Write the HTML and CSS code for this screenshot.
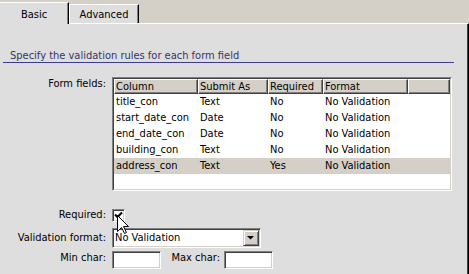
FILE: index.html
```html
<!DOCTYPE html>
<html>
<head>
<meta charset="utf-8">
<link rel="stylesheet" href="styles.css">
</head>
<body>
<div class="window">
  <div class="tabs">
    <div class="tab tab-active">Basic</div>
    <div class="tab tab-normal">Advanced</div>
  </div>
  <div class="panel">
    <div class="title">Specify the validation rules for each form field</div>

    <div class="field-row row-fields">
      <div class="lbl">Form fields:</div>
      <div class="list">
        <div class="list-inner">
          <div class="list-head">
            <div class="hc c1">Column</div>
            <div class="hc c2">Submit As</div>
            <div class="hc c3">Required</div>
            <div class="hc c4">Format</div>
            <div class="hc c5"></div>
          </div>
          <div class="list-row"><div class="dc c1">title_con</div><div class="dc c2">Text</div><div class="dc c3">No</div><div class="dc c4">No Validation</div></div>
          <div class="list-row"><div class="dc c1">start_date_con</div><div class="dc c2">Date</div><div class="dc c3">No</div><div class="dc c4">No Validation</div></div>
          <div class="list-row"><div class="dc c1">end_date_con</div><div class="dc c2">Date</div><div class="dc c3">No</div><div class="dc c4">No Validation</div></div>
          <div class="list-row"><div class="dc c1">building_con</div><div class="dc c2">Text</div><div class="dc c3">No</div><div class="dc c4">No Validation</div></div>
          <div class="list-row sel"><div class="dc c1">address_con</div><div class="dc c2">Text</div><div class="dc c3">Yes</div><div class="dc c4">No Validation</div></div>
        </div>
      </div>
    </div>

    <div class="field-row row-required">
      <div class="lbl">Required:</div>
      <div class="checkbox sunken">
        <svg width="9" height="9" viewBox="0 0 9 9"><path d="M1 3.5 L3.5 6 L8 1.5" fill="none" stroke="#000" stroke-width="2"/></svg>
      </div>
    </div>

    <div class="field-row row-format">
      <div class="lbl lbl-select">Validation format:</div>
      <div class="select sunken">
        <div class="select-text">No Validation</div>
        <div class="select-btn">
          <svg width="14" height="14" viewBox="0 0 14 14"><path d="M3 5 H10 L6.5 8.5 Z" fill="#000"/></svg>
        </div>
      </div>
    </div>

    <div class="field-row row-chars">
      <div class="lbl">Min char:</div>
      <div class="textbox sunken"></div>
      <div class="lbl-inline">Max char:</div>
      <div class="textbox textbox-max sunken"></div>
    </div>
  </div>

  <svg class="cursor" width="13" height="20" viewBox="0 0 13 20">
    <path d="M0.5 0.5 L0.5 16.5 L4.5 12.5 L7.5 18.5 L9.5 17.5 L6.5 11.5 L11.5 11.5 Z" fill="#fff" stroke="#000" stroke-width="1" stroke-linejoin="miter"/>
  </svg>
</div>
</body>
</html>
```

FILE: styles.css
```css
body {
  margin: 0;
  width: 469px;
  height: 274px;
  overflow: hidden;
  background: #d4d0c8;
  font-family: "DejaVu Sans Condensed", "DejaVu Sans", sans-serif;
  font-size: 11px;
  line-height: 13px;
  color: #000;
}

.window {
  position: relative;
  width: 469px;
  height: 274px;
  display: flex;
  flex-direction: column;
}

.tabs {
  height: 23px;
  flex-shrink: 0;
  display: flex;
  align-items: flex-end;
}

.tab {
  box-sizing: border-box;
  text-align: center;
  background: #dedede;
  border-top: 1px solid #fff;
  border-left: 1px solid #fff;
  border-right: 1px solid #000;
  box-shadow: inset -1px 0 #808080;
  white-space: nowrap;
}

.tab-active {
  width: 69px;
  height: 22px;
  margin-bottom: -1px;
  padding-top: 5px;
  border-left: 0;
  position: relative;
  z-index: 1;
}

.tab-normal {
  width: 70px;
  height: 19px;
  padding-top: 3px;
}

.panel {
  flex: 1;
  background: #dedede;
  border-top: 1px solid #fff;
  border-right: 1px solid #000;
  box-shadow: inset -1px 0 #404040;
}

.title {
  margin: 25px 0 0 3px;
  width: 451px;
  box-sizing: border-box;
  padding-left: 7px;
  line-height: 13px;
  color: #34346c;
  border-bottom: 1px solid #3d3d8f;
}

.field-row {
  display: flex;
  align-items: flex-start;
}

.lbl {
  width: 106px;
  margin-right: 6px;
  flex-shrink: 0;
  text-align: right;
  white-space: nowrap;
}

.row-fields { margin-top: 14px; }
.row-required { margin-top: 17px; }
.row-format { margin-top: 6px; }
.row-chars { margin-top: 3px; }

.lbl-select { padding-top: 3px; }

.sunken {
  box-sizing: border-box;
  border-style: solid;
  border-width: 1px;
  border-color: #808080 #fff #fff #808080;
  box-shadow: inset 1px 1px #404040, inset -1px -1px #d4d0c8;
  background: #fff;
}

/* list view */
.list {
  width: 340px;
  height: 114px;
  box-sizing: border-box;
  border-style: solid;
  border-width: 1px;
  border-color: #808080 #fff #fff #808080;
}

.list-inner {
  height: 100%;
  box-sizing: border-box;
  border-style: solid;
  border-width: 1px;
  border-color: #404040 #d4d0c8 #d4d0c8 #404040;
  background: #fff;
  overflow: hidden;
}

.list-head {
  display: flex;
  height: 15px;
}

.hc {
  box-sizing: border-box;
  height: 15px;
  background: #d4d0c8;
  border-top: 1px solid #fff;
  border-left: 1px solid #fff;
  border-right: 1px solid #404040;
  border-bottom: 1px solid #404040;
  box-shadow: inset -1px -1px #808080;
  padding-left: 1px;
  line-height: 13px;
  white-space: nowrap;
  overflow: hidden;
}

.list-row {
  display: flex;
  height: 16px;
  line-height: 16px;
}

.list-row.sel { background: #d4d0c8; }

.dc {
  box-sizing: border-box;
  padding-left: 2px;
  white-space: nowrap;
  overflow: hidden;
}

.c1 { width: 84px; flex-shrink: 0; }
.c2 { width: 70px; flex-shrink: 0; }
.c3 { width: 55px; flex-shrink: 0; }
.c4 { width: 85px; flex-shrink: 0; }
.c5 { flex: 1; }

/* checkbox */
.checkbox {
  width: 13px;
  height: 13px;
  margin-top: 1px;
  display: flex;
  align-items: center;
  justify-content: center;
}

.checkbox svg { display: block; }

/* select */
.select {
  width: 149px;
  height: 20px;
  display: flex;
  align-items: stretch;
}

.select-text {
  flex: 1;
  padding-left: 2px;
  line-height: 18px;
  white-space: nowrap;
}

.select-btn {
  width: 16px;
  height: 16px;
  margin: 1px;
  box-sizing: border-box;
  background: #d4d0c8;
  border-style: solid;
  border-width: 1px;
  border-color: #d4d0c8 #404040 #404040 #d4d0c8;
  box-shadow: inset 1px 1px #fff, inset -1px -1px #808080;
}

.select-btn svg { display: block; }

/* text boxes */
.textbox {
  width: 49px;
  height: 18px;
}

.lbl-inline {
  width: 53px;
  margin-left: 6px;
  margin-right: 4px;
  text-align: right;
  white-space: nowrap;
}

.cursor {
  position: absolute;
  left: 117px;
  top: 215px;
  display: block;
}
```
